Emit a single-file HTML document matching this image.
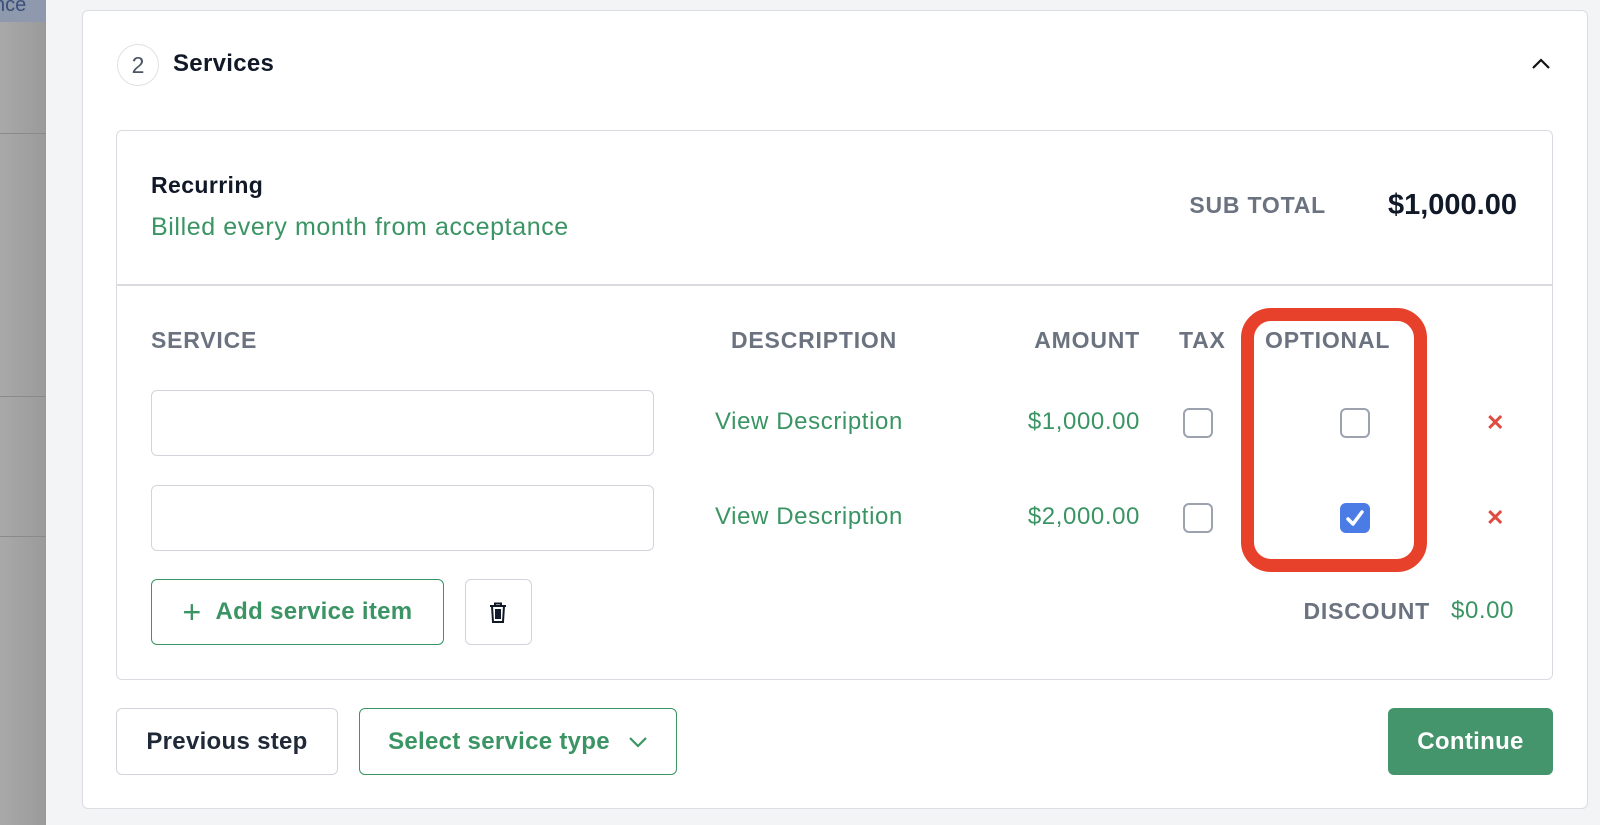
<!DOCTYPE html>
<html><head><meta charset="utf-8"><style>
*{box-sizing:border-box;margin:0;padding:0}
body{width:1600px;height:825px;overflow:hidden;background:#f3f4f6;font-family:"Liberation Sans",Arial,sans-serif;position:relative}
.a{position:absolute}
.strip{left:0;top:0;width:46px;height:825px;background:linear-gradient(90deg,#a9a9a9,#9a9a9a)}
.card{left:82px;top:10px;width:1506px;height:799px;background:#fff;border:1px solid #dcdde1;border-radius:6px}
.inner{left:116px;top:130px;width:1437px;height:550px;border:1.5px solid #d9dbe0;border-radius:6px;background:#fff}
.hdr{font-size:23px;font-weight:bold;color:#6b7280;top:327px;letter-spacing:0.8px}
.green{color:#3a9463}
.g{font-size:24px;letter-spacing:0.6px}
.inp{left:151px;width:503px;height:66px;border:1.5px solid #d1d5db;border-radius:6px;background:#fff}
.cb{width:30px;height:30px;border:2px solid #9ca3af;border-radius:6px;background:#fff}
.btn{border-radius:6px;display:flex;align-items:center;justify-content:center;font-weight:bold;font-size:24px;letter-spacing:0.3px}
.x{color:#e04a3f;font-size:22px;font-weight:bold}
</style></head><body>
<div class="a strip"></div>
<div class="a" style="left:0;top:0;width:46px;height:22px;background:#8e99ad"></div>
<div class="a" style="left:-6px;top:-6px;font-size:20px;color:#3b4f7a">nce</div>
<div class="a" style="left:0;top:133px;width:46px;height:1px;background:#8a8a8a"></div>
<div class="a" style="left:0;top:396px;width:46px;height:1px;background:#8a8a8a"></div>
<div class="a" style="left:0;top:536px;width:46px;height:1px;background:#8a8a8a"></div>

<div class="a card"></div>
<div class="a" style="left:117px;top:44px;width:42px;height:42px;border:1.5px solid #dfe1e5;border-radius:50%;text-align:center;line-height:40px;font-size:23px;color:#4b5563">2</div>
<div class="a" style="left:173px;top:50px;font-size:24px;font-weight:bold;color:#111827;letter-spacing:0.3px">Services</div>
<svg class="a" style="left:1530px;top:57px" width="22" height="14"><path d="M3 11 L11 3 L19 11" fill="none" stroke="#111" stroke-width="2.2"/></svg>

<div class="a inner"></div>
<div class="a" style="left:151px;top:172px;font-size:23px;font-weight:bold;color:#111827;letter-spacing:0.4px">Recurring</div>
<div class="a green g" style="left:151px;top:213px;font-size:25px">Billed every month from acceptance</div>
<div class="a" style="left:1100px;top:192px;width:226px;text-align:right;font-size:23px;font-weight:bold;color:#6b7280;letter-spacing:0.8px">SUB TOTAL</div>
<div class="a" style="left:1300px;top:189px;width:217px;text-align:right;font-size:29px;font-weight:bold;color:#111827">$1,000.00</div>
<div class="a" style="left:117px;top:284px;width:1435px;height:1.5px;background:#d9dbe0"></div>

<div class="a hdr" style="left:151px">SERVICE</div>
<div class="a hdr" style="left:731px">DESCRIPTION</div>
<div class="a hdr" style="left:990px;width:150px;text-align:right">AMOUNT</div>
<div class="a hdr" style="left:1179px">TAX</div>
<div class="a hdr" style="left:1265px">OPTIONAL</div>

<div class="a inp" style="top:390px"></div>
<div class="a inp" style="top:485px"></div>
<div class="a green g" style="left:715px;top:408px">View Description</div>
<div class="a green g" style="left:715px;top:503px">View Description</div>
<div class="a green g" style="left:960px;top:408px;width:180px;text-align:right">$1,000.00</div>
<div class="a green g" style="left:960px;top:503px;width:180px;text-align:right">$2,000.00</div>
<div class="a cb" style="left:1183px;top:408px"></div>
<div class="a cb" style="left:1183px;top:503px"></div>
<div class="a cb" style="left:1340px;top:408px"></div>
<div class="a" style="left:1340px;top:503px;width:30px;height:30px;border-radius:6px;background:#4b7be5"></div>
<svg class="a" style="left:1340px;top:503px" width="30" height="30"><path d="M8 16 L13 21 L22 9" fill="none" stroke="#fff" stroke-width="3.5" stroke-linecap="round" stroke-linejoin="round"/></svg>
<div class="a x" style="left:1486px;top:410px">✕</div>
<div class="a x" style="left:1486px;top:505px">✕</div>

<div class="a btn green" style="left:151px;top:579px;width:293px;height:66px;border:1.5px solid #3a9463">
<span style="font-weight:normal;font-size:32px;margin-right:14px;line-height:1">+</span>Add service item</div>
<div class="a" style="left:465px;top:579px;width:67px;height:66px;border:1.5px solid #d1d5db;border-radius:6px"></div>
<svg class="a" style="left:487px;top:601px" width="22" height="24"><path d="M3 5 H19 M8 5 V2.5 H14 V5 M5 5 L6 21 H16 L17 5 M9 8 V18 M11 8 V18 M13 8 V18" fill="none" stroke="#111827" stroke-width="2"/></svg>
<div class="a" style="left:1230px;top:598px;width:200px;text-align:right;font-size:23px;font-weight:bold;color:#6b7280;letter-spacing:0.8px">DISCOUNT</div>
<div class="a green g" style="left:1451px;top:597px">$0.00</div>

<div class="a" style="left:1241px;top:308px;width:186px;height:264px;border:13px solid #e8412b;border-radius:30px"></div>

<div class="a btn" style="left:116px;top:708px;width:222px;height:67px;border:1.5px solid #d1d5db;color:#1f2937">Previous step</div>
<div class="a btn green" style="left:359px;top:708px;width:318px;height:67px;border:1.5px solid #3a9463">Select service type
<svg style="margin-left:18px" width="20" height="12"><path d="M2 2 L10 10 L18 2" fill="none" stroke="#3a9463" stroke-width="2.2"/></svg></div>
<div class="a btn" style="left:1388px;top:708px;width:165px;height:67px;background:#45956c;color:#fff">Continue</div>
</body></html>
